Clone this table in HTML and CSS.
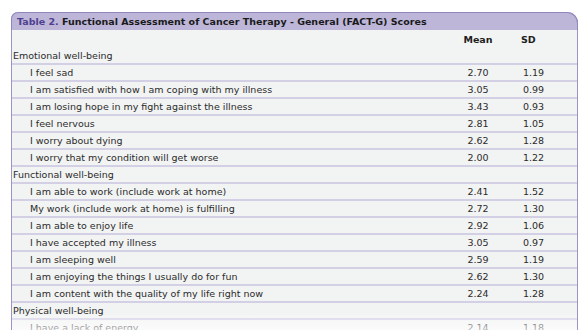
FILE: index.html
```html
<!DOCTYPE html>
<html lang="en">
<head>
    <meta charset="UTF-8">
    <meta name="viewport" content="width=device-width, initial-scale=1.0">
    <title>Table 2. FACT-G Scores</title>
    <link rel="stylesheet" href="styles.css">
</head>
<body>
    <div class="table-box">
        <div class="caption"><span class="label">Table 2.</span> Functional Assessment of Cancer Therapy - General (FACT-G) Scores</div>
        <table class="scores">
            <colgroup>
                <col>
                <col class="col-mean">
                <col class="col-sd">
            </colgroup>
            <thead>
                <tr>
                    <th class="item"></th>
                    <th class="num">Mean</th>
                    <th class="sd">SD</th>
                </tr>
            </thead>
            <tbody>
                <tr class="group"><td colspan="3">Emotional well-being</td></tr>
                <tr><td class="item">I feel sad</td><td class="num">2.70</td><td class="num">1.19</td></tr>
                <tr><td class="item">I am satisfied with how I am coping with my illness</td><td class="num">3.05</td><td class="num">0.99</td></tr>
                <tr><td class="item">I am losing hope in my fight against the illness</td><td class="num">3.43</td><td class="num">0.93</td></tr>
                <tr><td class="item">I feel nervous</td><td class="num">2.81</td><td class="num">1.05</td></tr>
                <tr><td class="item">I worry about dying</td><td class="num">2.62</td><td class="num">1.28</td></tr>
                <tr><td class="item">I worry that my condition will get worse</td><td class="num">2.00</td><td class="num">1.22</td></tr>
                <tr class="group"><td colspan="3">Functional well-being</td></tr>
                <tr><td class="item">I am able to work (include work at home)</td><td class="num">2.41</td><td class="num">1.52</td></tr>
                <tr><td class="item">My work (include work at home) is fulfilling</td><td class="num">2.72</td><td class="num">1.30</td></tr>
                <tr><td class="item">I am able to enjoy life</td><td class="num">2.92</td><td class="num">1.06</td></tr>
                <tr><td class="item">I have accepted my illness</td><td class="num">3.05</td><td class="num">0.97</td></tr>
                <tr><td class="item">I am sleeping well</td><td class="num">2.59</td><td class="num">1.19</td></tr>
                <tr><td class="item">I am enjoying the things I usually do for fun</td><td class="num">2.62</td><td class="num">1.30</td></tr>
                <tr><td class="item">I am content with the quality of my life right now</td><td class="num">2.24</td><td class="num">1.28</td></tr>
                <tr class="group"><td colspan="3">Physical well-being</td></tr>
                <tr><td class="item">I have a lack of energy</td><td class="num">2.14</td><td class="num">1.18</td></tr>
            </tbody>
        </table>
        <div class="fade"></div>
    </div>
</body>
</html>
```

FILE: styles.css
```css
body {
    margin: 0;
    padding: 12px 9px 0 11px;
    background-color: #fff;
    font-family: 'DejaVu Sans', sans-serif;
    color: #2b2b2b;
    overflow: hidden;
}

.table-box {
    position: relative;
    width: 567px;
    background-color: #f2f3f3;
    border-left: 1px solid #9c94c4;
    border-right: 1px solid #9c94c4;
    border-radius: 7px 11px 0 0;
    box-sizing: border-box;
}

.caption {
    height: 17px;
    line-height: 17px;
    padding-left: 5px;
    background-color: #bdb6d9;
    border: 1px solid #8f86ba;
    border-bottom: none;
    border-radius: 7px 11px 0 0;
    margin: 0 -1px;
    font-size: 9.5px;
    font-weight: bold;
    color: #1a1a1a;
    white-space: nowrap;
}

.caption .label {
    color: #4e3f8f;
}

.scores {
    width: 100%;
    table-layout: fixed;
    border-collapse: collapse;
    font-size: 9.5px;
}

.col-mean {
    width: 56px;
}

.col-sd {
    width: 71px;
}

.scores th {
    height: 18px;
    font-weight: bold;
    font-size: 9.5px;
    color: #1e1e1e;
    padding: 0;
}

.scores td {
    height: 15px;
    padding: 0;
    border-bottom: 2px solid #d3cfe5;
    white-space: nowrap;
}

.scores .item {
    padding-left: 18px;
    text-align: left;
}

.scores .group td {
    padding-left: 1px;
    color: #2b2b2b;
}

.scores .num {
    text-align: center;
}

.scores td.num:last-child {
    padding-right: 16px;
}

.scores th.sd {
    text-align: left;
    padding-left: 15px;
}

.fade {
    position: absolute;
    left: 0;
    right: 0;
    bottom: 0;
    height: 22px;
    background: linear-gradient(to bottom, rgba(255, 255, 255, 0.2), rgba(255, 255, 255, 0.85));
}
```
